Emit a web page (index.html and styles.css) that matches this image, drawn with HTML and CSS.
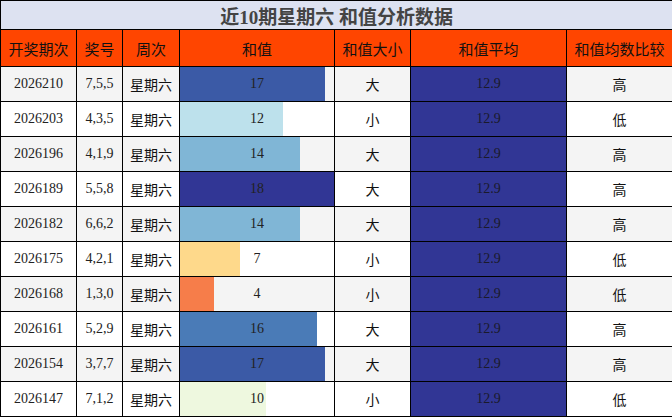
FILE: index.html
```html
<!DOCTYPE html>
<html lang="zh">
<head>
<meta charset="utf-8">
<link rel="stylesheet" href="styles.css">
</head>
<body>
<table class="tbl">
  <colgroup>
    <col class="c1"><col class="c2"><col class="c3"><col class="c4"><col class="c5"><col class="c6"><col class="c7">
  </colgroup>
  <tr class="title-row"><th colspan="7">近10期星期六 和值分析数据</th></tr>
  <tr class="head-row">
    <th>开奖期次</th><th>奖号</th><th>周次</th><th>和值</th><th>和值大小</th><th>和值平均</th><th>和值均数比较</th>
  </tr>
  <tr class="odd"><td>2026210</td><td>7,5,5</td><td class="cn">星期六</td><td class="sum"><div class="barcell"><div class="bar" style="width:94.44%;background:#3b5aa6"></div><span class="lbl">17</span></div></td><td class="cn">大</td><td class="avg">12.9</td><td class="cn">高</td></tr>
  <tr><td>2026203</td><td>4,3,5</td><td class="cn">星期六</td><td class="sum"><div class="barcell"><div class="bar" style="width:66.67%;background:#bde1ec"></div><span class="lbl">12</span></div></td><td class="cn">小</td><td class="avg">12.9</td><td class="cn">低</td></tr>
  <tr class="odd"><td>2026196</td><td>4,1,9</td><td class="cn">星期六</td><td class="sum"><div class="barcell"><div class="bar" style="width:77.78%;background:#80b6d6"></div><span class="lbl">14</span></div></td><td class="cn">大</td><td class="avg">12.9</td><td class="cn">高</td></tr>
  <tr><td>2026189</td><td>5,5,8</td><td class="cn">星期六</td><td class="sum"><div class="barcell"><div class="bar" style="width:100%;background:#313695"></div><span class="lbl">18</span></div></td><td class="cn">大</td><td class="avg">12.9</td><td class="cn">高</td></tr>
  <tr class="odd"><td>2026182</td><td>6,6,2</td><td class="cn">星期六</td><td class="sum"><div class="barcell"><div class="bar" style="width:77.78%;background:#80b6d6"></div><span class="lbl">14</span></div></td><td class="cn">大</td><td class="avg">12.9</td><td class="cn">高</td></tr>
  <tr><td>2026175</td><td>4,2,1</td><td class="cn">星期六</td><td class="sum"><div class="barcell"><div class="bar" style="width:38.89%;background:#fed98b"></div><span class="lbl">7</span></div></td><td class="cn">小</td><td class="avg">12.9</td><td class="cn">低</td></tr>
  <tr class="odd"><td>2026168</td><td>1,3,0</td><td class="cn">星期六</td><td class="sum"><div class="barcell"><div class="bar" style="width:22.22%;background:#f67d4a"></div><span class="lbl">4</span></div></td><td class="cn">小</td><td class="avg">12.9</td><td class="cn">低</td></tr>
  <tr><td>2026161</td><td>5,2,9</td><td class="cn">星期六</td><td class="sum"><div class="barcell"><div class="bar" style="width:88.89%;background:#4a7bb7"></div><span class="lbl">16</span></div></td><td class="cn">大</td><td class="avg">12.9</td><td class="cn">高</td></tr>
  <tr class="odd"><td>2026154</td><td>3,7,7</td><td class="cn">星期六</td><td class="sum"><div class="barcell"><div class="bar" style="width:94.44%;background:#3b5aa6"></div><span class="lbl">17</span></div></td><td class="cn">大</td><td class="avg">12.9</td><td class="cn">高</td></tr>
  <tr><td>2026147</td><td>7,1,2</td><td class="cn">星期六</td><td class="sum"><div class="barcell"><div class="bar" style="width:55.56%;background:#eef8df"></div><span class="lbl">10</span></div></td><td class="cn">小</td><td class="avg">12.9</td><td class="cn">低</td></tr>
</table>
</body>
</html>
```

FILE: styles.css
```css
html, body {
  margin: 0;
  padding: 0;
  background: #fff;
}
.tbl {
  border-collapse: collapse;
  table-layout: fixed;
  width: 672px;
  font-family: "Liberation Serif", "Noto Sans CJK SC", serif;
  color: #222;
}
.c1 { width: 76px; }
.c2 { width: 46px; }
.c3 { width: 57px; }
.c4 { width: 155px; }
.c5 { width: 76px; }
.c6 { width: 156px; }
.c7 { width: 106px; }
.tbl th, .tbl td {
  border: 1px solid #000;
  padding: 0;
  text-align: center;
  vertical-align: middle;
}
.title-row th {
  height: 28px;
  background: #dde2f1;
  color: #444;
  font-size: 19px;
  font-weight: bold;
}
.head-row th {
  height: 36px;
  background: #ff4500;
  color: #111;
  font-size: 15px;
  font-weight: normal;
}
.tbl td {
  height: 34px;
  font-size: 14px;
}
.odd td { background: #f4f4f4; }
.cn { color: #111; }
.tbl td.avg {
  background: #313695;
  color: #1a1a2a;
}
.barcell {
  display: grid;
  height: 34px;
  align-items: center;
}
.bar, .lbl {
  grid-area: 1 / 1;
}
.bar {
  height: 100%;
  justify-self: start;
}
.lbl {
  justify-self: center;
}
```
